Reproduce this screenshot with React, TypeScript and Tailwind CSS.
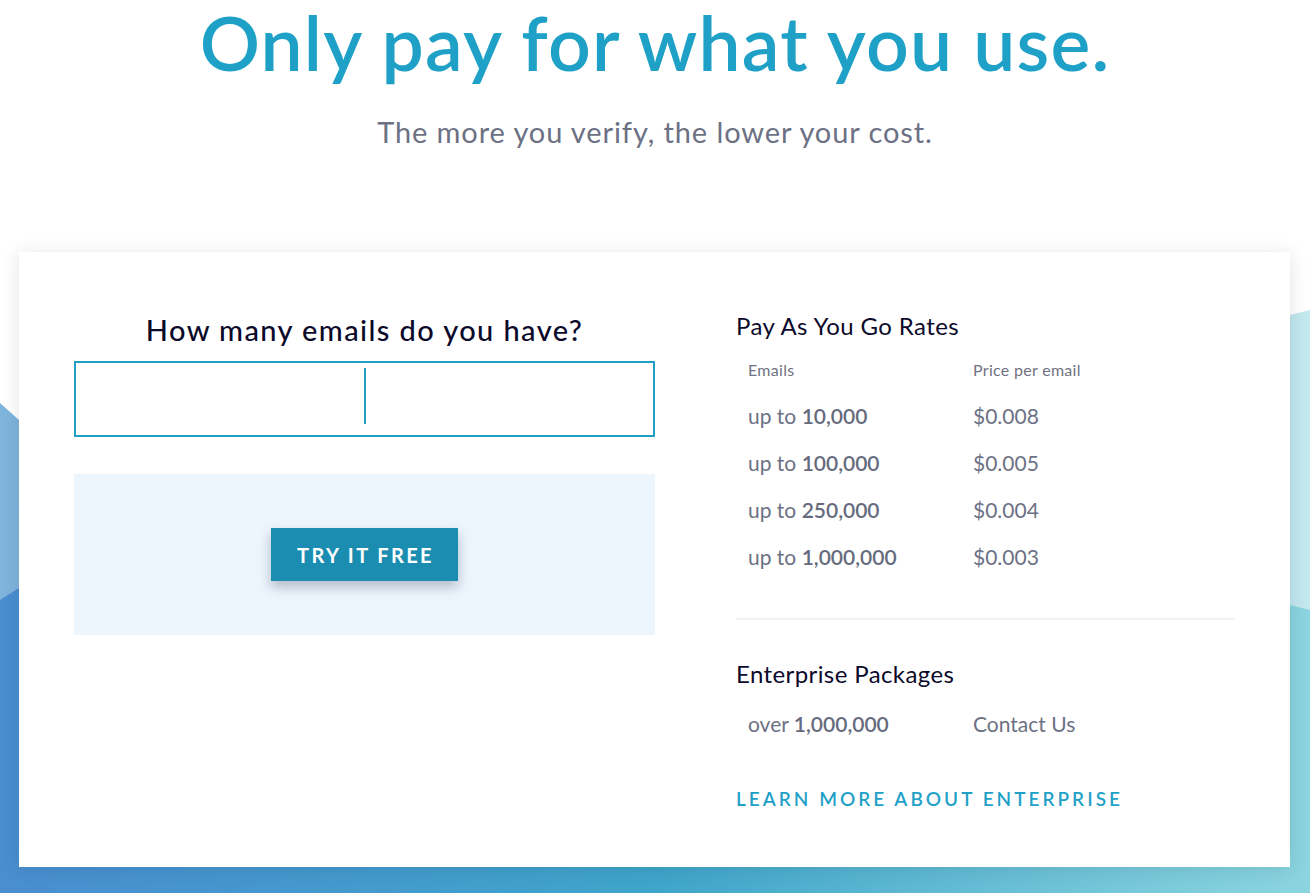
import React from "react";

const rows = [
  ["10,000", "$0.008"],
  ["100,000", "$0.005"],
  ["250,000", "$0.004"],
  ["1,000,000", "$0.003"],
];

function Background() {
  return (
    <svg
      className="absolute inset-0 h-full w-full"
      viewBox="0 0 1310 893"
      preserveAspectRatio="none"
    >
      <defs>
        <linearGradient id="lightG" x1="0" y1="0" x2="1" y2="0">
          <stop offset="0" stopColor="#7fb4dc" />
          <stop offset="1" stopColor="#c3e8ee" />
        </linearGradient>
        <linearGradient id="darkG" x1="0" y1="0" x2="1" y2="0">
          <stop offset="0" stopColor="#4a8ed0" />
          <stop offset="0.5" stopColor="#3fa5ca" />
          <stop offset="1" stopColor="#8cd5e0" />
        </linearGradient>
      </defs>
      <polygon points="0,403 19,420 1290,315 1310,310 1310,893 0,893" fill="url(#lightG)" />
      <polygon points="0,600 19,588 1290,605 1310,610 1310,893 0,893" fill="url(#darkG)" />
    </svg>
  );
}

export default function App() {
  return (
    <div
      className="relative h-[893px] w-full overflow-hidden bg-white"
      style={{ fontFamily: "Lato, 'Noto Sans', sans-serif" }}
    >
      <Background />
      <div className="relative flex flex-col items-center pt-[6px]">
        <h1 className="text-[75px] font-semibold leading-[72px] tracking-[1.2px] text-[#1fa1c7]">
          Only pay for what you use.
        </h1>
        <p className="mt-[36px] text-[29px] leading-[36px] tracking-[0.9px] text-[#6c7184]">
          The more you verify, the lower your cost.
        </p>
      </div>
      <div className="relative ml-[19px] mr-[20px] mt-[102px] flex h-[615px] bg-white px-[55px] shadow-[0_2px_18px_rgba(20,30,60,0.12)]">
        <div className="flex w-[581px] flex-col pt-[62px]">
          <h2 className="text-center text-[29px] font-medium leading-[32px] tracking-[1.4px] text-[#0c0a2b]">
            How many emails do you have?
          </h2>
          <div className="mt-[15px] flex h-[76px] justify-center border-2 border-[#1f9fc3] pt-[5px]">
            <div className="h-[56px] w-[2px] bg-[#1f9fc3]" />
          </div>
          <div className="mt-[37px] flex h-[161px] items-center justify-center bg-[#eef6fd]">
            <button className="h-[53px] w-[187px] bg-[#1b8db0] pl-[2px] text-[20px] font-bold tracking-[2.4px] text-white shadow-[0_6px_12px_rgba(30,50,80,0.3)]">
              TRY IT FREE
            </button>
          </div>
        </div>
        <div className="ml-[81px] flex flex-1 flex-col pt-[60px]">
          <h3 className="text-[24px] leading-[28px] tracking-[0.4px] text-[#0c0a2b]">Pay As You Go Rates</h3>
          <div className="mt-[20px] flex pl-[12px] text-[16px] leading-[20px] tracking-[0.3px] text-[#6f7282]">
            <span className="w-[225px]">Emails</span>
            <span>Price per email</span>
          </div>
          <div className="mt-[12px] flex flex-col">
            {rows.map(([n, p]) => (
              <div key={n} className="flex h-[47px] items-center pl-[12px] text-[21px] text-[#6c7184]">
                <span className="w-[225px]">
                  up to <span className="font-semibold text-[#656b7d]">{n}</span>
                </span>
                <span>{p}</span>
              </div>
            ))}
          </div>
          <div className="mt-[38px] h-[2px] w-full bg-[#f0f2f5]" />
          <h3 className="mt-[40px] text-[24px] leading-[28px] tracking-[0.4px] text-[#0c0a2b]">Enterprise Packages</h3>
          <div className="mt-[12px] flex h-[47px] items-center pl-[12px] text-[21px] text-[#6c7184]">
            <span className="w-[225px]">
              over <span className="font-semibold text-[#656b7d]">1,000,000</span>
            </span>
            <span>Contact Us</span>
          </div>
          <a className="mt-[40px] text-[19px] font-semibold leading-[24px] tracking-[3px] text-[#1fa1c7]">
            LEARN MORE ABOUT ENTERPRISE
          </a>
        </div>
      </div>
    </div>
  );
}
